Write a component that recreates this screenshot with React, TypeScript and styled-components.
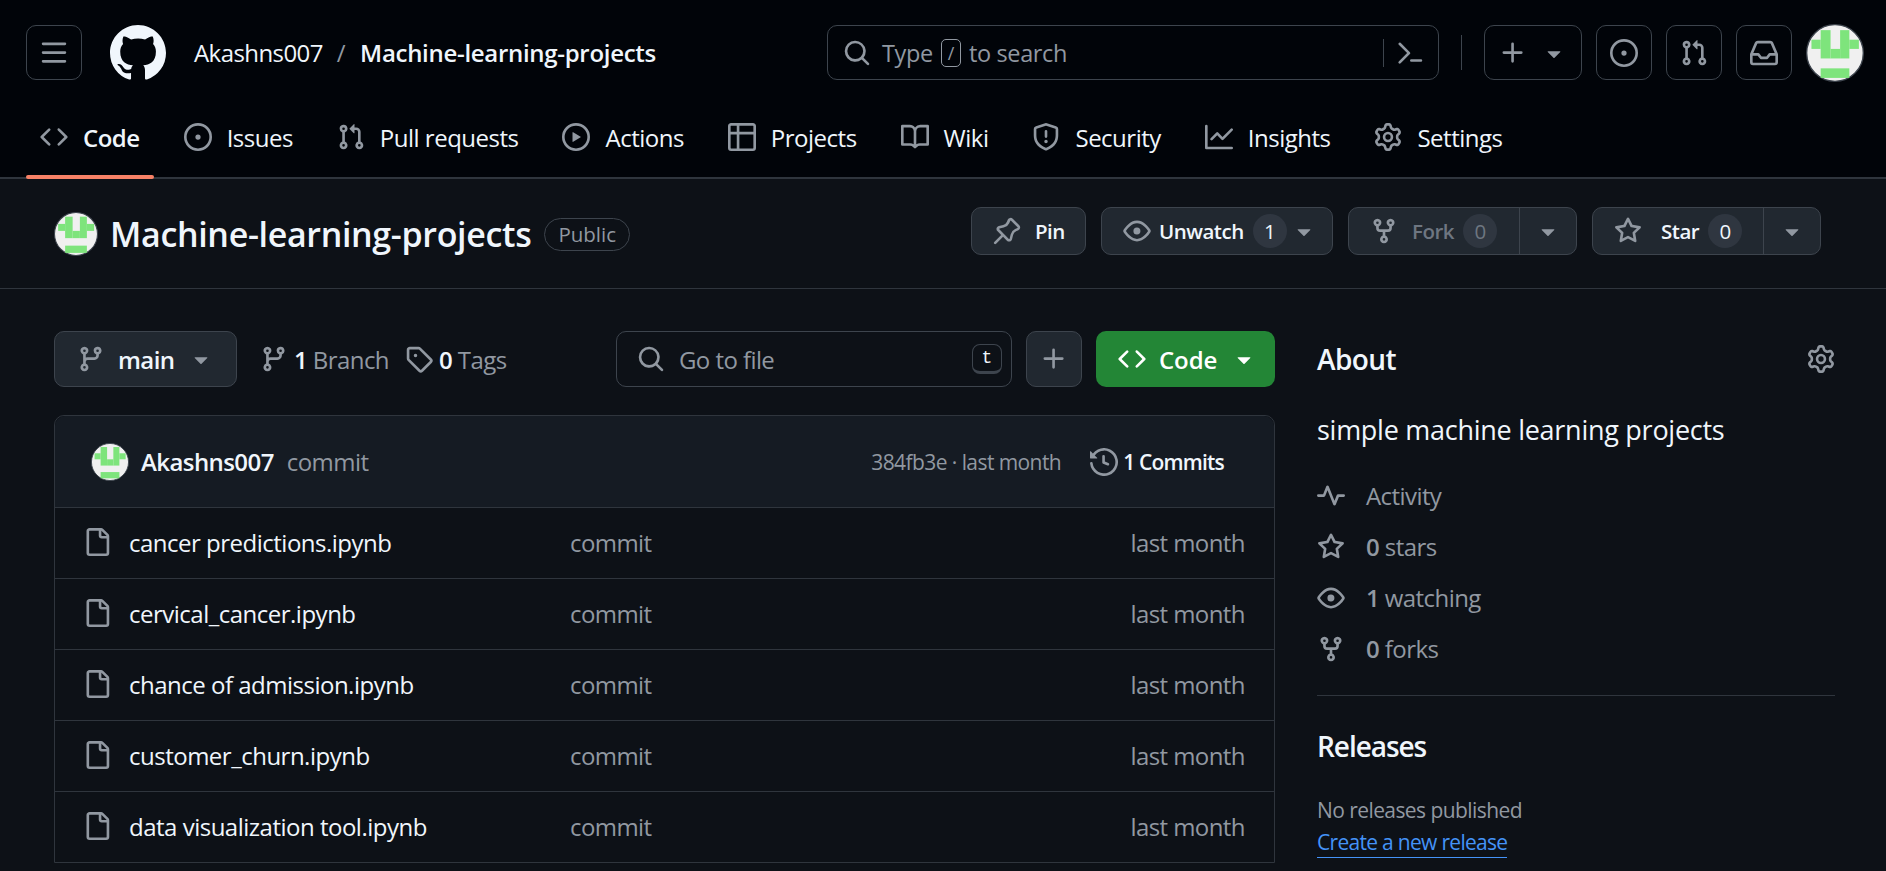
import React from 'react';
import styled, { createGlobalStyle } from 'styled-components';

const text = '#f0f6fc';
const muted = '#9198a1';
const line = '#3d444d';
const softLine = '#2f353d';
const btn = '#212830';

const GlobalStyle = createGlobalStyle`
  html, body {
    margin: 0;
    height: 100%;
    overflow: hidden;
    background: #0d1117;
  }
  body {
    color: ${text};
    font-family: "Open Sans", "Noto Sans", "Liberation Sans", sans-serif;
    font-size: 23px;
    letter-spacing: -0.575px;
  }
  * { box-sizing: border-box; }
`;

const Page = styled.div`
  width: 1886px;
  height: 871px;
  overflow: hidden;
`;

const Header = styled.header`
  background: #010409;
`;

const TopRow = styled.div`
  display: flex;
  align-items: center;
  height: 105px;
  padding: 25px 22px 25px 26px;
`;

const IconBox = styled.button<{ $w?: number }>`
  display: inline-flex;
  align-items: center;
  justify-content: center;
  gap: 13px;
  width: ${({ $w }) => $w ?? 56}px;
  height: 55px;
  padding: 0;
  color: ${muted};
  background: transparent;
  border: 1px solid ${line};
  border-radius: 10px;
`;

const Logo = styled.div`
  display: flex;
  margin: 0 28px;
  color: ${text};
`;

const Crumbs = styled.div`
  display: flex;
  align-items: center;
  gap: 14px;
  font-size: 24px;
`;

const Slash = styled.span`
  color: ${muted};
`;

const CrumbRepo = styled.span`
  font-weight: 600;
  letter-spacing: -0.3px;
  margin-left: 1px;
`;

const TopRight = styled.div`
  display: flex;
  align-items: center;
  gap: 14px;
  margin-left: auto;
`;

const SearchBox = styled.div`
  display: flex;
  align-items: center;
  width: 612px;
  height: 55px;
  padding: 0 14px 0 15px;
  color: ${muted};
  border: 1px solid ${line};
  border-radius: 10px;
`;

const SearchLabel = styled.span`
  display: flex;
  align-items: center;
  gap: 8px;
  margin-left: 11px;
  font-size: 23.5px;
  letter-spacing: -0.35px;
`;

const Slashkey = styled.span`
  display: inline-flex;
  align-items: center;
  justify-content: center;
  width: 20px;
  height: 28px;
  font-size: 18px;
  border: 1px solid ${muted};
  border-radius: 5px;
`;

const SearchEnd = styled.span`
  display: flex;
  align-items: center;
  gap: 12px;
  margin-left: auto;
`;

const VLine = styled.span<{ $h: number }>`
  width: 1px;
  height: ${({ $h }) => $h}px;
  background: ${line};
`;

const Divider = styled(VLine)`
  margin: 0 8px;
`;

const Tabs = styled.nav`
  display: flex;
  gap: 16px;
  height: 74px;
  padding: 0 26px;
  border-bottom: 2px solid ${softLine};
`;

const Tab = styled.a<{ $active?: boolean }>`
  position: relative;
  display: flex;
  align-items: center;
  gap: 15px;
  height: 72px;
  padding: 0 14px 8px 14px;
  font-size: 24px;
  letter-spacing: -0.5px;
  font-weight: ${({ $active }) => ($active ? 600 : 400)};
  color: ${text};

  svg {
    color: ${muted};
  }

  ${({ $active }) =>
    $active &&
    `&::after {
      content: '';
      position: absolute;
      left: 0;
      right: 0;
      bottom: -2px;
      height: 4px;
      background: #f78166;
      border-radius: 2px;
    }`}
`;

const RepoHead = styled.section`
  display: flex;
  justify-content: space-between;
  height: 110px;
  padding: 28px 65px 0 54px;
  border-bottom: 1px solid ${softLine};
`;

const RepoTitle = styled.div`
  display: flex;
  align-items: center;
  height: 54px;
`;

const RepoName = styled.h1`
  margin: 0 13px 0 12px;
  font-size: 34px;
  font-weight: 600;
  letter-spacing: -0.33px;
`;

const Badge = styled.span`
  display: flex;
  align-items: center;
  height: 33px;
  padding: 0 13px;
  font-size: 20.5px;
  font-weight: 500;
  letter-spacing: 0;
  color: ${muted};
  border: 1px solid ${line};
  border-radius: 17px;
`;

const RepoActions = styled.div`
  display: flex;
  gap: 15px;
`;

const Action = styled.div<{ $w: number; $dim?: boolean }>`
  display: flex;
  align-items: center;
  width: ${({ $w }) => $w}px;
  height: 48px;
  font-size: 20.5px;
  font-weight: 600;
  letter-spacing: -0.5px;
  color: ${({ $dim }) => ($dim ? '#6e7681' : text)};
  background: ${btn};
  border: 1px solid ${line};
  border-radius: 10px;

  svg {
    color: ${muted};
    flex: none;
  }
`;

const ActionMain = styled.div<{ $gap: number }>`
  display: flex;
  align-items: center;
  flex: 1;
  gap: ${({ $gap }) => $gap}px;
  height: 100%;
  padding-left: 21px;
`;

const ActionLabel = styled.span`
  display: inline-flex;
  align-items: center;
  gap: 9px;
`;

const ActionCaret = styled.div`
  display: flex;
  align-items: center;
  justify-content: center;
  width: 57px;
  height: 100%;
  border-left: 1px solid ${line};
`;

const Count = styled.span`
  display: inline-flex;
  align-items: center;
  justify-content: center;
  width: 34px;
  height: 34px;
  font-size: 20.5px;
  font-weight: 500;
  background: #2f3640;
  border-radius: 17px;
`;

const Main = styled.main`
  display: flex;
  gap: 42px;
  padding: 42px 51px 0 54px;
`;

const Content = styled.div`
  flex: none;
  width: 1221px;
`;

const FileNav = styled.div`
  display: flex;
  align-items: center;
  height: 56px;
  margin-bottom: 28px;
`;

const Branch = styled.div`
  display: flex;
  align-items: center;
  gap: 13px;
  width: 183px;
  height: 56px;
  padding: 0 0 0 22px;
  font-size: 24px;
  font-weight: 600;
  color: ${text};
  background: ${btn};
  border: 1px solid ${line};
  border-radius: 10px;

  svg {
    color: ${muted};
    flex: none;
  }
`;

const NavStat = styled.span<{ $ml: number }>`
  display: flex;
  align-items: center;
  gap: 6px;
  margin-left: ${({ $ml }) => $ml}px;
  font-size: 24px;
  color: ${muted};

  svg {
    flex: none;
  }

  b {
    font-weight: 600;
    color: ${text};
  }
`;

const GoToFile = styled.div`
  display: flex;
  align-items: center;
  width: 396px;
  height: 56px;
  margin-left: auto;
  padding: 0 9px 0 20px;
  color: ${muted};
  font-size: 24px;
  border: 1px solid ${line};
  border-radius: 10px;
`;

const GoToLabel = styled.span`
  margin-left: 14px;
`;

const Kbd = styled.span`
  display: flex;
  align-items: center;
  justify-content: center;
  width: 30px;
  height: 30px;
  margin-left: auto;
  font-family: "Liberation Mono", monospace;
  font-size: 18px;
  letter-spacing: 0;
  color: ${text};
  border: 1px solid ${line};
  border-bottom-width: 3px;
  border-radius: 8px;
`;

const AddBtn = styled.div`
  display: flex;
  align-items: center;
  justify-content: center;
  width: 56px;
  height: 56px;
  margin-left: 14px;
  color: ${muted};
  background: ${btn};
  border: 1px solid ${line};
  border-radius: 10px;
`;

const CodeBtn = styled.div`
  display: flex;
  align-items: center;
  gap: 13px;
  width: 179px;
  height: 56px;
  margin-left: 14px;
  padding: 0 0 0 22px;
  font-size: 24px;
  font-weight: 600;
  letter-spacing: -0.1px;
  color: #fff;
  background: #238636;
  border-radius: 10px;

  svg {
    flex: none;
  }
`;

const Box = styled.div`
  border: 1px solid ${softLine};
  border-radius: 10px 10px 0 0;
`;

const BoxHead = styled.div`
  display: flex;
  align-items: center;
  height: 91px;
  padding: 0 50px 0 36px;
  background: #151b23;
  border-radius: 10px 10px 0 0;
`;

const Author = styled.span`
  margin-left: 12px;
  font-size: 24px;
  font-weight: 600;
`;

const CommitMsg = styled.span`
  margin-left: 13px;
  font-size: 24px;
  color: ${muted};
`;

const Hash = styled.span`
  margin-left: auto;
  font-size: 21px;
  color: ${muted};
`;

const History = styled.span`
  display: flex;
  align-items: center;
  gap: 5px;
  margin-left: 29px;
  font-size: 21px;
  font-weight: 600;
  letter-spacing: -0.8px;

  svg {
    color: ${muted};
  }
`;

const FileRow = styled.div`
  display: flex;
  align-items: center;
  height: 71px;
  padding: 0 29px 2px 28px;
  border-top: 1px solid ${softLine};
  font-size: 24px;

  svg {
    color: ${muted};
    flex: none;
  }
`;

const FileName = styled.span`
  width: 441px;
  margin-left: 18px;
  letter-spacing: -0.5px;
`;

const Dim = styled.span`
  color: ${muted};
`;

const When = styled(Dim)`
  margin-left: auto;
`;

const Side = styled.aside`
  flex: 1;
`;

const SideTitle = styled.div`
  display: flex;
  align-items: center;
  justify-content: space-between;
  height: 56px;
  font-size: 28px;
  font-weight: 600;

  svg {
    color: ${muted};
  }
`;

const Desc = styled.p`
  margin: 22px 0 19px;
  font-size: 27px;
  line-height: 42px;
  letter-spacing: -0.27px;
`;

const Stat = styled.div`
  display: flex;
  align-items: center;
  gap: 21px;
  height: 51px;
  font-size: 24px;
  color: ${muted};

  svg {
    flex: none;
  }

  b {
    font-weight: 600;
  }
`;

const SideRule = styled.hr`
  margin: 21px 0 0;
  border: 0;
  border-top: 1px solid ${softLine};
`;

const Releases = styled(SideTitle)`
  margin-top: 22px;
  letter-spacing: -1.05px;
`;

const Note = styled.div`
  margin-top: 21px;
  font-size: 21px;
  line-height: 30px;
  color: ${muted};
`;

const CreateLink = styled.a`
  display: inline-block;
  font-size: 21px;
  line-height: 29px;
  letter-spacing: -0.7px;
  color: #4493f8;
  border-bottom: 1.5px solid #4493f8;
`;

function Avatar({ size }: { size: number }) {
  return (
    <svg width={size} height={size} viewBox="0 0 170 170" aria-label="avatar">
      <circle cx="85" cy="85" r="83" fill="#f0f0f0" stroke="#3d444d" strokeWidth="4" />
      <g fill="#7ee47c">
        <rect x="43" y="18" width="29" height="83" />
        <rect x="100" y="18" width="27" height="83" />
        <rect x="16" y="46" width="27" height="27" />
        <rect x="127" y="46" width="28" height="27" />
        <rect x="72" y="73" width="28" height="28" />
        <rect x="43" y="130" width="84" height="28" />
      </g>
    </svg>
  );
}

// octicons, 16px grid, drawn at 1.75x like the rest of the page
const icons = {
  bars: 'M1 2.75A.75.75 0 0 1 1.75 2h12.5a.75.75 0 0 1 0 1.5H1.75A.75.75 0 0 1 1 2.75Zm0 5A.75.75 0 0 1 1.75 7h12.5a.75.75 0 0 1 0 1.5H1.75A.75.75 0 0 1 1 7.75ZM1.75 12h12.5a.75.75 0 0 1 0 1.5H1.75a.75.75 0 0 1 0-1.5Z',
  github:
    'M8 0c4.42 0 8 3.58 8 8a8.013 8.013 0 0 1-5.45 7.59c-.4.08-.55-.17-.55-.38 0-.27.01-1.13.01-2.2 0-.75-.25-1.23-.54-1.48 1.78-.2 3.65-.88 3.65-3.95 0-.88-.31-1.59-.82-2.15.08-.2.36-1.02-.08-2.12 0 0-.67-.22-2.2.82-.64-.18-1.32-.27-2-.27-.68 0-1.36.09-2 .27-1.53-1.03-2.2-.82-2.2-.82-.44 1.1-.16 1.92-.08 2.12-.51.56-.82 1.28-.82 2.15 0 3.06 1.86 3.75 3.64 3.95-.23.2-.44.55-.51 1.07-.46.21-1.61.55-2.33-.66-.15-.24-.6-.83-1.23-.82-.67.01-.27.38.01.53.34.19.73.9.82 1.13.16.45.68 1.31 2.69.94 0 .67.01 1.3.01 1.49 0 .21-.15.45-.55.38A7.995 7.995 0 0 1 0 8c0-4.42 3.58-8 8-8Z',
  code: 'm11.28 3.22 4.25 4.25a.75.75 0 0 1 0 1.06l-4.25 4.25a.749.749 0 0 1-1.275-.326.749.749 0 0 1 .215-.734L13.94 8l-3.72-3.72a.749.749 0 0 1 .326-1.275.749.749 0 0 1 .734.215Zm-6.56 0a.751.751 0 0 1 1.042.018.751.751 0 0 1 .018 1.042L2.06 8l3.72 3.72a.749.749 0 0 1-.326 1.275.749.749 0 0 1-.734-.215L.47 8.53a.75.75 0 0 1 0-1.06Z',
  issue:
    'M8 9.5a1.5 1.5 0 1 0 0-3 1.5 1.5 0 0 0 0 3ZM8 0a8 8 0 1 1 0 16A8 8 0 0 1 8 0ZM1.5 8a6.5 6.5 0 1 0 13 0 6.5 6.5 0 0 0-13 0Z',
  pull: 'M1.5 3.25a2.25 2.25 0 1 1 3 2.122v5.256a2.251 2.251 0 1 1-1.5 0V5.372A2.25 2.25 0 0 1 1.5 3.25Zm5.677-.177L9.573.677A.25.25 0 0 1 10 .854V2.5h1A2.5 2.5 0 0 1 13.5 5v5.628a2.251 2.251 0 1 1-1.5 0V5a1 1 0 0 0-1-1h-1v1.646a.25.25 0 0 1-.427.177L7.177 3.427a.25.25 0 0 1 0-.354ZM3.75 2.5a.75.75 0 1 0 0 1.5.75.75 0 0 0 0-1.5Zm0 9.5a.75.75 0 1 0 0 1.5.75.75 0 0 0 0-1.5Zm8.25.75a.75.75 0 1 0 1.5 0 .75.75 0 0 0-1.5 0Z',
  play: 'M8 0a8 8 0 1 1 0 16A8 8 0 0 1 8 0ZM1.5 8a6.5 6.5 0 1 0 13 0 6.5 6.5 0 0 0-13 0Zm4.879-2.773 4.264 2.559a.25.25 0 0 1 0 .428l-4.264 2.559A.25.25 0 0 1 6 10.559V5.442a.25.25 0 0 1 .379-.215Z',
  table:
    'M0 1.75C0 .784.784 0 1.75 0h12.5C15.216 0 16 .784 16 1.75v12.5A1.75 1.75 0 0 1 14.25 16H1.75A1.75 1.75 0 0 1 0 14.25ZM6.5 6.5v8h7.75a.25.25 0 0 0 .25-.25V6.5Zm8-1.5V1.75a.25.25 0 0 0-.25-.25H6.5V5Zm-13 1.5v7.75c0 .138.112.25.25.25H5v-8ZM5 5V1.5H1.75a.25.25 0 0 0-.25.25V5Z',
  book: 'M0 1.75A.75.75 0 0 1 .75 1h4.253c1.227 0 2.317.59 3 1.501A3.743 3.743 0 0 1 11.006 1h4.245a.75.75 0 0 1 .75.75v10.5a.75.75 0 0 1-.75.75h-4.507a2.25 2.25 0 0 0-1.591.659l-.622.621a.75.75 0 0 1-1.06 0l-.622-.621A2.25 2.25 0 0 0 5.258 13H.75a.75.75 0 0 1-.75-.75Zm7.251 10.324.004-5.073-.002-2.253A2.25 2.25 0 0 0 5.003 2.5H1.5v9h3.757a3.75 3.75 0 0 1 1.994.574ZM8.755 4.75l-.004 7.322a3.752 3.752 0 0 1 1.992-.572H14.5v-9h-3.495a2.25 2.25 0 0 0-2.25 2.25Z',
  shield:
    'M7.467.133a1.748 1.748 0 0 1 1.066 0l5.25 1.68A1.75 1.75 0 0 1 15 3.48V7c0 1.566-.32 3.182-1.303 4.682-.983 1.498-2.585 2.813-5.032 3.855a1.697 1.697 0 0 1-1.33 0c-2.447-1.042-4.049-2.357-5.032-3.855C1.32 10.182 1 8.566 1 7V3.48a1.75 1.75 0 0 1 1.217-1.667Zm.61 1.429a.25.25 0 0 0-.153 0l-5.25 1.68a.25.25 0 0 0-.174.238V7c0 1.358.275 2.666 1.057 3.86.784 1.194 2.121 2.34 4.366 3.297a.196.196 0 0 0 .154 0c2.245-.956 3.582-2.104 4.366-3.298C13.225 9.666 13.5 8.36 13.5 7V3.48a.251.251 0 0 0-.174-.237l-5.25-1.68ZM8.75 4.75v3a.75.75 0 0 1-1.5 0v-3a.75.75 0 0 1 1.5 0ZM9 10.5a1 1 0 1 1-2 0 1 1 0 0 1 2 0Z',
  graph:
    'M1.5 1.75V13.5h13.75a.75.75 0 0 1 0 1.5H.75a.75.75 0 0 1-.75-.75V1.75a.75.75 0 0 1 1.5 0Zm14.28 2.53-5.25 5.25a.75.75 0 0 1-1.06 0L7 7.06 4.28 9.78a.751.751 0 0 1-1.042-.018.751.751 0 0 1-.018-1.042l3.25-3.25a.75.75 0 0 1 1.06 0L10 7.94l4.72-4.72a.751.751 0 0 1 1.042.018.751.751 0 0 1 .018 1.042Z',
  gear: 'M8 0a8.2 8.2 0 0 1 .701.031C9.444.095 9.99.645 10.16 1.29l.288 1.107c.018.066.079.158.212.224.231.114.454.243.668.386.123.082.233.09.299.071l1.103-.303c.644-.176 1.392.021 1.82.63.27.385.506.792.704 1.218.315.675.111 1.422-.364 1.891l-.814.806c-.049.048-.098.147-.088.294.016.257.016.515 0 .772-.01.147.038.246.088.294l.814.806c.475.469.679 1.216.364 1.891a7.977 7.977 0 0 1-.704 1.217c-.428.61-1.176.807-1.82.63l-1.102-.302c-.067-.019-.177-.011-.3.071a5.909 5.909 0 0 1-.668.386c-.133.066-.194.158-.211.224l-.29 1.106c-.168.646-.715 1.196-1.458 1.26a8.006 8.006 0 0 1-1.402 0c-.743-.064-1.289-.614-1.458-1.26l-.289-1.106c-.018-.066-.079-.158-.212-.224a5.738 5.738 0 0 1-.668-.386c-.123-.082-.233-.09-.299-.071l-1.103.303c-.644.176-1.392-.021-1.82-.63a8.12 8.12 0 0 1-.704-1.218c-.315-.675-.111-1.422.363-1.891l.815-.806c.05-.048.098-.147.088-.294a6.214 6.214 0 0 1 0-.772c.01-.147-.038-.246-.088-.294l-.815-.806C.635 6.045.431 5.298.746 4.623a7.92 7.92 0 0 1 .704-1.217c.428-.61 1.176-.807 1.82-.63l1.102.302c.067.019.177.011.3-.071.214-.143.437-.272.668-.386.133-.066.194-.158.211-.224l.29-1.106C6.009.645 6.556.095 7.299.03 7.53.01 7.764 0 8 0Zm-.571 1.525c-.036.003-.108.036-.137.146l-.289 1.105c-.147.561-.549.967-.998 1.189-.173.086-.34.183-.5.29-.417.278-.97.423-1.529.27l-1.103-.303c-.109-.03-.175.016-.195.045-.22.312-.412.644-.573.99-.014.031-.021.11.059.19l.815.806c.411.406.562.957.53 1.456a4.709 4.709 0 0 0 0 .582c.032.499-.119 1.05-.53 1.456l-.815.806c-.081.08-.073.159-.059.19.162.346.353.677.573.989.02.03.085.076.195.046l1.102-.303c.56-.153 1.113-.008 1.53.27.161.107.328.204.501.29.447.222.85.629.997 1.189l.289 1.105c.029.109.101.143.137.146a6.6 6.6 0 0 0 1.142 0c.036-.003.108-.036.137-.146l.289-1.105c.147-.561.549-.967.998-1.189.173-.086.34-.183.5-.29.417-.278.97-.423 1.529-.27l1.103.303c.109.029.175-.016.195-.045.22-.313.411-.644.573-.99.014-.031.021-.11-.059-.19l-.815-.806c-.411-.406-.562-.957-.53-1.456a4.709 4.709 0 0 0 0-.582c-.032-.499.119-1.05.53-1.456l.815-.806c.081-.08.073-.159.059-.19a6.464 6.464 0 0 0-.573-.989c-.02-.03-.085-.076-.195-.046l-1.102.303c-.56.153-1.113.008-1.53-.27a4.44 4.44 0 0 0-.501-.29c-.447-.222-.85-.629-.997-1.189l-.289-1.105c-.029-.11-.101-.143-.137-.146a6.6 6.6 0 0 0-1.142 0ZM11 8a3 3 0 1 1-6 0 3 3 0 0 1 6 0ZM9.5 8a1.5 1.5 0 1 0-3.001.001A1.5 1.5 0 0 0 9.5 8Z',
  search:
    'M10.68 11.74a6 6 0 0 1-7.922-8.982 6 6 0 0 1 8.982 7.922l3.04 3.04a.749.749 0 0 1-.326 1.275.749.749 0 0 1-.734-.215ZM11.5 7a4.499 4.499 0 1 0-8.997 0A4.499 4.499 0 0 0 11.5 7Z',
  palette:
    'm6.354 8.04-4.773 4.773a.75.75 0 1 0 1.061 1.06L7.945 8.57a.75.75 0 0 0 0-1.06L2.642 2.206a.75.75 0 0 0-1.06 1.061L6.353 8.04ZM8.75 11.5a.75.75 0 0 0 0 1.5h5.5a.75.75 0 0 0 0-1.5h-5.5Z',
  plus: 'M7.75 2a.75.75 0 0 1 .75.75V7h4.25a.75.75 0 0 1 0 1.5H8.5v4.25a.75.75 0 0 1-1.5 0V8.5H2.75a.75.75 0 0 1 0-1.5H7V2.75A.75.75 0 0 1 7.75 2Z',
  caret:
    'm4.427 7.427 3.396 3.396a.25.25 0 0 0 .354 0l3.396-3.396A.25.25 0 0 0 11.396 7H4.604a.25.25 0 0 0-.177.427Z',
  inbox:
    'M2.8 2.06A1.75 1.75 0 0 1 4.41 1h7.18c.7 0 1.333.417 1.61 1.06l2.74 6.395c.04.093.06.194.06.295v4.5A1.75 1.75 0 0 1 14.25 15H1.75A1.75 1.75 0 0 1 0 13.25v-4.5c0-.101.02-.202.06-.295Zm1.61.44a.25.25 0 0 0-.23.152L1.887 8H4.75a.75.75 0 0 1 .6.3L6.625 10h2.75l1.275-1.7a.75.75 0 0 1 .6-.3h2.863L11.82 2.652a.25.25 0 0 0-.23-.152Zm10.09 7h-2.875l-1.275 1.7a.75.75 0 0 1-.6.3h-3.5a.75.75 0 0 1-.6-.3L4.375 9.5H1.5v3.75c0 .138.112.25.25.25h12.5a.25.25 0 0 0 .25-.25Z',
  pin: 'm11.294.984 3.722 3.722a1.75 1.75 0 0 1-.504 2.826l-1.327.613a3.089 3.089 0 0 0-1.707 2.084l-.584 2.454c-.317 1.332-1.972 1.8-2.94.832L5.75 11.311 1.78 15.28a.749.749 0 0 1-1.275-.326.749.749 0 0 1 .215-.734L4.69 10.25 2.487 8.046c-.968-.968-.5-2.623.832-2.94l2.454-.584a3.08 3.08 0 0 0 2.084-1.707l.613-1.327a1.75 1.75 0 0 1 2.824-.504ZM9.89 2.18l-.613 1.327a4.58 4.58 0 0 1-3.098 2.537l-2.454.584a.25.25 0 0 0-.12.42l5.47 5.47a.25.25 0 0 0 .42-.12l.584-2.454a4.58 4.58 0 0 1 2.537-3.098l1.327-.613a.25.25 0 0 0 .072-.404l-3.722-3.722a.25.25 0 0 0-.404.072Z',
  eye: 'M8 2c1.981 0 3.671.992 4.933 2.078 1.27 1.091 2.187 2.345 2.637 3.023a1.62 1.62 0 0 1 0 1.798c-.45.678-1.367 1.932-2.637 3.023C11.67 13.008 9.981 14 8 14c-1.981 0-3.671-.992-4.933-2.078C1.797 10.83.88 9.576.43 8.898a1.62 1.62 0 0 1 0-1.798c.45-.677 1.367-1.931 2.637-3.022C4.33 2.992 6.019 2 8 2ZM1.679 7.932a.12.12 0 0 0 0 .136c.411.622 1.241 1.75 2.366 2.717C5.176 11.758 6.527 12.5 8 12.5c1.473 0 2.825-.742 3.955-1.715 1.124-.967 1.954-2.096 2.366-2.717a.12.12 0 0 0 0-.136c-.412-.621-1.242-1.75-2.366-2.717C10.824 4.242 9.473 3.5 8 3.5c-1.473 0-2.825.742-3.955 1.715-1.124.967-1.954 2.096-2.366 2.717ZM8 10a2 2 0 1 1-.001-3.999A2 2 0 0 1 8 10Z',
  fork: 'M5 5.372v.878c0 .414.336.75.75.75h4.5a.75.75 0 0 0 .75-.75v-.878a2.25 2.25 0 1 1 1.5 0v.878a2.25 2.25 0 0 1-2.25 2.25h-1.5v2.128a2.251 2.251 0 1 1-1.5 0V8.5h-1.5A2.25 2.25 0 0 1 3.5 6.25v-.878a2.25 2.25 0 1 1 1.5 0ZM5 3.25a.75.75 0 1 0-1.5 0 .75.75 0 0 0 1.5 0Zm6.75.75a.75.75 0 1 0 0-1.5.75.75 0 0 0 0 1.5Zm-3 8.75a.75.75 0 1 0-1.5 0 .75.75 0 0 0 1.5 0Z',
  star: 'M8 .25a.75.75 0 0 1 .673.418l1.882 3.815 4.21.612a.75.75 0 0 1 .416 1.279l-3.046 2.97.719 4.192a.751.751 0 0 1-1.088.791L8 12.347l-3.766 1.98a.75.75 0 0 1-1.088-.79l.72-4.194L.818 6.374a.75.75 0 0 1 .416-1.28l4.21-.611L7.327.668A.75.75 0 0 1 8 .25Zm0 2.445L6.615 5.5a.75.75 0 0 1-.564.41l-3.097.45 2.24 2.184a.75.75 0 0 1 .216.664l-.528 3.084 2.769-1.456a.75.75 0 0 1 .698 0l2.77 1.456-.53-3.084a.75.75 0 0 1 .216-.664l2.24-2.183-3.096-.45a.75.75 0 0 1-.564-.41L8 2.694Z',
  branch:
    'M9.5 3.25a2.25 2.25 0 1 1 3 2.122V6A2.5 2.5 0 0 1 10 8.5H6a1 1 0 0 0-1 1v1.128a2.251 2.251 0 1 1-1.5 0V5.372a2.25 2.25 0 1 1 1.5 0v1.836A2.493 2.493 0 0 1 6 7h4a1 1 0 0 0 1-1v-.628A2.25 2.25 0 0 1 9.5 3.25Zm-6 0a.75.75 0 1 0 1.5 0 .75.75 0 0 0-1.5 0Zm8.25-.75a.75.75 0 1 0 0 1.5.75.75 0 0 0 0-1.5ZM4.25 12a.75.75 0 1 0 0 1.5.75.75 0 0 0 0-1.5Z',
  tag: 'M1 7.775V2.75C1 1.784 1.784 1 2.75 1h5.025c.464 0 .91.184 1.238.513l6.25 6.25a1.75 1.75 0 0 1 0 2.474l-5.026 5.026a1.75 1.75 0 0 1-2.474 0l-6.25-6.25A1.752 1.752 0 0 1 1 7.775Zm1.5 0c0 .066.026.13.073.177l6.25 6.25a.25.25 0 0 0 .354 0l5.025-5.025a.25.25 0 0 0 0-.354l-6.25-6.25a.25.25 0 0 0-.177-.073H2.75a.25.25 0 0 0-.25.25ZM6 5a1 1 0 1 1 0 2 1 1 0 0 1 0-2Z',
  history:
    'm.427 1.927 1.215 1.215a8.002 8.002 0 1 1-1.6 5.685.75.75 0 1 1 1.493-.154 6.5 6.5 0 1 0 1.18-4.458l1.358 1.358A.25.25 0 0 1 3.896 6H.25A.25.25 0 0 1 0 5.75V2.104a.25.25 0 0 1 .427-.177ZM7.75 4a.75.75 0 0 1 .75.75v2.992l2.028.812a.75.75 0 0 1-.557 1.392l-2.5-1A.751.751 0 0 1 7 8.25v-3.5A.75.75 0 0 1 7.75 4Z',
  file: 'M2 1.75C2 .784 2.784 0 3.75 0h6.586c.464 0 .909.184 1.237.513l2.914 2.914c.329.328.513.773.513 1.237v9.586A1.75 1.75 0 0 1 13.25 16h-9.5A1.75 1.75 0 0 1 2 14.25Zm1.75-.25a.25.25 0 0 0-.25.25v12.5c0 .138.112.25.25.25h9.5a.25.25 0 0 0 .25-.25V6h-2.75A1.75 1.75 0 0 1 9 4.25V1.5Zm6.75.062V4.25c0 .138.112.25.25.25h2.688l-.011-.013-2.914-2.914-.013-.011Z',
  pulse:
    'M6 2c.306 0 .582.187.696.471L10 10.731l1.304-3.26A.751.751 0 0 1 12 7h3.25a.75.75 0 0 1 0 1.5h-2.742l-1.812 4.528a.751.751 0 0 1-1.392 0L6 4.77 4.696 8.03A.75.75 0 0 1 4 8.5H.75a.75.75 0 0 1 0-1.5h2.742l1.812-4.529A.751.751 0 0 1 6 2Z',
};

type IconName = keyof typeof icons;

function Icon({ name, size = 28, className }: { name: IconName; size?: number; className?: string }) {
  return (
    <svg className={className} width={size} height={size} viewBox="0 0 16 16" fill="currentColor">
      <path d={icons[name]} />
    </svg>
  );
}

const TightCaret = styled(Icon)`
  margin-left: -5px;
`;

const navTabs: { label: string; icon: IconName; active?: boolean }[] = [
  { label: 'Code', icon: 'code', active: true },
  { label: 'Issues', icon: 'issue' },
  { label: 'Pull requests', icon: 'pull' },
  { label: 'Actions', icon: 'play' },
  { label: 'Projects', icon: 'table' },
  { label: 'Wiki', icon: 'book' },
  { label: 'Security', icon: 'shield' },
  { label: 'Insights', icon: 'graph' },
  { label: 'Settings', icon: 'gear' },
];

const files = [
  'cancer predictions.ipynb',
  'cervical_cancer.ipynb',
  'chance of admission.ipynb',
  'customer_churn.ipynb',
  'data visualization tool.ipynb',
];

export default function App() {
  return (
    <Page>
      <GlobalStyle />
      <Header>
        <TopRow>
          <IconBox>
            <Icon name="bars" />
          </IconBox>
          <Logo>
            <Icon name="github" size={56} />
          </Logo>
          <Crumbs>
            <span>Akashns007</span>
            <Slash>/</Slash>
            <CrumbRepo>Machine-learning-projects</CrumbRepo>
          </Crumbs>
          <TopRight>
            <SearchBox>
              <Icon name="search" />
              <SearchLabel>
                Type <Slashkey>/</Slashkey> to search
              </SearchLabel>
              <SearchEnd>
                <VLine $h={28} />
                <Icon name="palette" />
              </SearchEnd>
            </SearchBox>
            <Divider $h={35} />
            <IconBox $w={98}>
              <Icon name="plus" />
              <Icon name="caret" />
            </IconBox>
            <IconBox>
              <Icon name="issue" />
            </IconBox>
            <IconBox>
              <Icon name="pull" />
            </IconBox>
            <IconBox>
              <Icon name="inbox" />
            </IconBox>
            <Avatar size={58} />
          </TopRight>
        </TopRow>
        <Tabs>
          {navTabs.map(({ label, icon, active }) => (
            <Tab key={label} $active={active}>
              <Icon name={icon} />
              {label}
            </Tab>
          ))}
        </Tabs>
      </Header>

      <RepoHead>
        <RepoTitle>
          <Avatar size={44} />
          <RepoName>Machine-learning-projects</RepoName>
          <Badge>Public</Badge>
        </RepoTitle>
        <RepoActions>
          <Action $w={115}>
            <ActionMain $gap={14}>
              <Icon name="pin" />
              Pin
            </ActionMain>
          </Action>
          <Action $w={232}>
            <ActionMain $gap={8}>
              <Icon name="eye" />
              <ActionLabel>
                Unwatch
                <Count>1</Count>
              </ActionLabel>
              <TightCaret name="caret" />
            </ActionMain>
          </Action>
          <Action $w={229} $dim>
            <ActionMain $gap={14}>
              <Icon name="fork" />
              <ActionLabel>
                Fork
                <Count>0</Count>
              </ActionLabel>
            </ActionMain>
            <ActionCaret>
              <Icon name="caret" />
            </ActionCaret>
          </Action>
          <Action $w={229}>
            <ActionMain $gap={19}>
              <Icon name="star" />
              <ActionLabel>
                Star
                <Count>0</Count>
              </ActionLabel>
            </ActionMain>
            <ActionCaret>
              <Icon name="caret" />
            </ActionCaret>
          </Action>
        </RepoActions>
      </RepoHead>

      <Main>
        <Content>
          <FileNav>
            <Branch>
              <Icon name="branch" />
              main
              <Icon name="caret" />
            </Branch>
            <NavStat $ml={23}>
              <Icon name="branch" />
              <span>
                <b>1</b> Branch
              </span>
            </NavStat>
            <NavStat $ml={16}>
              <Icon name="tag" />
              <span>
                <b>0</b> Tags
              </span>
            </NavStat>
            <GoToFile>
              <Icon name="search" />
              <GoToLabel>Go to file</GoToLabel>
              <Kbd>t</Kbd>
            </GoToFile>
            <AddBtn>
              <Icon name="plus" />
            </AddBtn>
            <CodeBtn>
              <Icon name="code" />
              Code
              <Icon name="caret" />
            </CodeBtn>
          </FileNav>
          <Box>
            <BoxHead>
              <Avatar size={38} />
              <Author>Akashns007</Author>
              <CommitMsg>commit</CommitMsg>
              <Hash>384fb3e · last month</Hash>
              <History>
                <Icon name="history" />1 Commits
              </History>
            </BoxHead>
            {files.map((name) => (
              <FileRow key={name}>
                <Icon name="file" />
                <FileName>{name}</FileName>
                <Dim>commit</Dim>
                <When>last month</When>
              </FileRow>
            ))}
          </Box>
        </Content>
        <Side>
          <SideTitle>
            About
            <Icon name="gear" />
          </SideTitle>
          <Desc>simple machine learning projects</Desc>
          <Stat>
            <Icon name="pulse" />
            <span>Activity</span>
          </Stat>
          <Stat>
            <Icon name="star" />
            <span>
              <b>0</b> stars
            </span>
          </Stat>
          <Stat>
            <Icon name="eye" />
            <span>
              <b>1</b> watching
            </span>
          </Stat>
          <Stat>
            <Icon name="fork" />
            <span>
              <b>0</b> forks
            </span>
          </Stat>
          <SideRule />
          <Releases>Releases</Releases>
          <Note>No releases published</Note>
          <CreateLink>Create a new release</CreateLink>
        </Side>
      </Main>
    </Page>
  );
}
